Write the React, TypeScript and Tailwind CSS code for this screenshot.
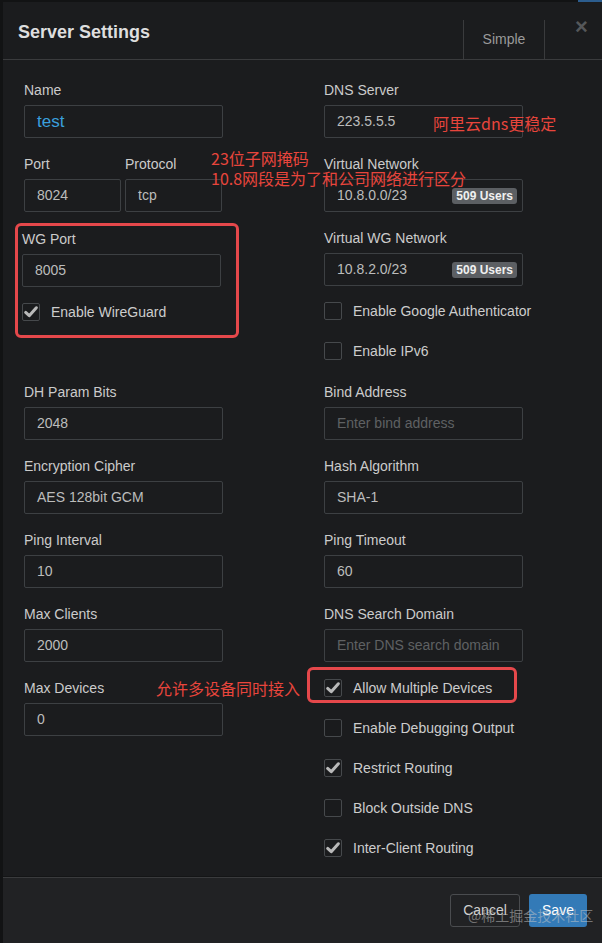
import React from "react";

const sans = "font-['Liberation_Sans',Arial,sans-serif]";
const cjk = "font-['Noto_Sans_CJK_SC','Liberation_Sans',sans-serif]";

const CheckBox = ({ checked, label }: { checked?: boolean; label: string }) => (
  <div className="flex h-[20px] items-center gap-[11px]">
    <div className="flex h-[18px] w-[18px] items-center justify-center rounded-[2px] border border-[#46494c] bg-[#1a1b1d]">
      {checked && (
        <svg viewBox="0 0 18 18" className="h-[16px] w-[16px]">
          <path
            d="M3 9.5 L7 13.2 L15 4.2"
            fill="none"
            stroke="#b9b9b9"
            strokeWidth="3.4"
            strokeLinecap="round"
            strokeLinejoin="round"
          />
        </svg>
      )}
    </div>
    <span className="text-[14px] text-[#cdcdcd]">{label}</span>
  </div>
);

const Input = ({
  value,
  placeholder,
  blue,
  badge,
  width = "w-[199px]",
}: {
  value?: string;
  placeholder?: string;
  blue?: boolean;
  badge?: string;
  width?: string;
}) => (
  <div
    className={`mt-[5px] flex h-[33px] ${width} items-center rounded-[2px] border border-[#3d4043] pl-[12px] pr-[5px]`}
  >
    {value ? (
      <span className={blue ? "text-[17px] text-[#3a9fdc]" : "text-[14px] text-[#bcbcbc]"}>{value}</span>
    ) : (
      <span className="text-[14px] text-[#5f6163]">{placeholder}</span>
    )}
    {badge && (
      <span className="ml-auto rounded-[3px] bg-[#5c5f63] px-[4px] text-[12px] font-bold leading-[16px] text-[#f0f0f0]">
        {badge}
      </span>
    )}
  </div>
);

const Label = ({ children }: { children: React.ReactNode }) => (
  <div className="h-[20px] text-[14px] leading-[20px] text-[#cbcbcb]">{children}</div>
);

export default function App() {
  return (
    <div className={`relative h-[943px] w-[602px] overflow-hidden bg-[#121314] pl-[3px] pt-[2px] ${sans}`}>
      <div className="absolute right-0 top-0 h-[2px] w-[24px] bg-[#2c5d8e]" />
      <div className="flex h-[941px] flex-col bg-[#1b1c1e]">
        {/* header */}
        <div className="flex h-[58px] border-b border-[#3a3b3d]">
          <div className="pl-[15px] pt-[18px] text-[18px] font-bold leading-[24px] text-[#dedede]">
            Server Settings
          </div>
          <div className="ml-auto mt-[18px] flex h-[39px] w-[82px] items-center justify-center border-x border-[#3a3b3d] text-[14px] text-[#9a9a9a]">
            Simple
          </div>
          <div className="w-[57px] pl-[30px] pt-[13px] text-[22px] font-bold leading-[24px] text-[#55575a]">
            ×
          </div>
        </div>

        {/* body */}
        <div className="relative flex flex-1 border-b border-[#141516] pl-[21px] pt-[20px]">
          <div className="w-[300px]">
            <Label>Name</Label>
            <Input value="test" blue />

            <div className="mt-[16px] flex gap-[4px]">
              <div>
                <Label>Port</Label>
                <Input value="8024" width="w-[97px]" />
              </div>
              <div>
                <Label>Protocol</Label>
                <Input value="tcp" width="w-[97px]" />
              </div>
            </div>

            <div className="-ml-[9px] mt-[11px] w-[224px] rounded-[6px] border-[3px] border-[#e5484b] pb-[13px] pl-[4px] pt-[3px]">
              <Label>WG Port</Label>
              <Input value="8005" />
              <div className="mt-[15px]">
                <CheckBox checked label="Enable WireGuard" />
              </div>
            </div>

            <div className="mt-[44px]">
              <Label>DH Param Bits</Label>
              <Input value="2048" />
            </div>
            <div className="mt-[16px]">
              <Label>Encryption Cipher</Label>
              <Input value="AES 128bit GCM" />
            </div>
            <div className="mt-[16px]">
              <Label>Ping Interval</Label>
              <Input value="10" />
            </div>
            <div className="mt-[16px]">
              <Label>Max Clients</Label>
              <Input value="2000" />
            </div>
            <div className="mt-[16px]">
              <div className="flex">
                <div className="w-[132px]">
                  <Label>Max Devices</Label>
                </div>
                <span className={`text-[16px] leading-[20px] text-[#e8453c] ${cjk}`}>允许多设备同时接入</span>
              </div>
              <Input value="0" />
            </div>
          </div>

          <div className="w-[210px]">
            <Label>DNS Server</Label>
            <Input value="223.5.5.5" />
            <div className="mt-[16px]">
              <Label>Virtual Network</Label>
              <Input value="10.8.0.0/23" badge="509 Users" />
            </div>
            <div className="mt-[16px]">
              <Label>Virtual WG Network</Label>
              <Input value="10.8.2.0/23" badge="509 Users" />
            </div>
            <div className="mt-[15px]">
              <CheckBox label="Enable Google Authenticator" />
            </div>
            <div className="mt-[20px]">
              <CheckBox label="Enable IPv6" />
            </div>
            <div className="mt-[21px]">
              <Label>Bind Address</Label>
              <Input placeholder="Enter bind address" />
            </div>
            <div className="mt-[16px]">
              <Label>Hash Algorithm</Label>
              <Input value="SHA-1" />
            </div>
            <div className="mt-[16px]">
              <Label>Ping Timeout</Label>
              <Input value="60" />
            </div>
            <div className="mt-[16px]">
              <Label>DNS Search Domain</Label>
              <Input placeholder="Enter DNS search domain" />
            </div>
            <div className="relative mt-[16px]">
              <CheckBox checked label="Allow Multiple Devices" />
              <div className="absolute -left-[17px] -top-[11px] h-[36px] w-[210px] rounded-[6px] border-[3px] border-[#e5484b]" />
            </div>
            <div className="mt-[20px]">
              <CheckBox label="Enable Debugging Output" />
            </div>
            <div className="mt-[20px]">
              <CheckBox checked label="Restrict Routing" />
            </div>
            <div className="mt-[20px]">
              <CheckBox label="Block Outside DNS" />
            </div>
            <div className="mt-[20px]">
              <CheckBox checked label="Inter-Client Routing" />
            </div>
          </div>

          {/* annotations */}
          <div className={`absolute left-[208px] top-[88px] text-[16px] leading-[20px] text-[#e8453c] ${cjk}`}>
            <div>23位子网掩码</div>
            <div>10.8网段是为了和公司网络进行区分</div>
          </div>
          <div className={`absolute left-[430px] top-[53px] text-[16px] leading-[20px] text-[#e8453c] ${cjk}`}>
            阿里云dns更稳定
          </div>
        </div>

        {/* footer */}
        <div className="relative flex h-[66px] justify-end gap-[9px] border-t border-[#3a3b3d] bg-[#212224] pr-[15px] pt-[16px]">
          <button className="h-[33px] w-[70px] rounded-[3px] border border-[#4a4c4f] text-[14px] text-[#cfcfcf]">
            Cancel
          </button>
          <button className="h-[33px] w-[58px] rounded-[3px] bg-[#337ab7] text-[14px] text-white">Save</button>
          <div className={`absolute left-[465px] top-[27px] text-[14px] leading-[20px] text-[#c8c8c8]/50 ${cjk}`}>
            @稀土掘金技术社区
          </div>
        </div>
      </div>
    </div>
  );
}
